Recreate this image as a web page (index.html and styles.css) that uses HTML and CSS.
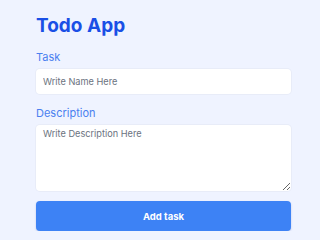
FILE: index.html
```html
<!DOCTYPE html>
<html>
<head>
<meta charset="utf-8">
<link rel="stylesheet" href="styles.css">
</head>
<body>
<div class="app">
  <h1 class="title">Todo App</h1>
  <form class="form">
    <label class="label" for="task">Task</label>
    <input class="input" id="task" type="text" placeholder="Write Name Here">
    <label class="label label-desc" for="desc">Description</label>
    <textarea class="textarea" id="desc" placeholder="Write Description Here"></textarea>
    <button class="button" type="button">Add task</button>
  </form>
</div>
</body>
</html>
```
FILE: styles.css
```css
html, body {
  margin: 0;
  padding: 0;
  background: #eff3ff;
  font-family: Inter, "Noto Sans", sans-serif;
}
.app {
  padding: 12px 29px 0 36px;
}
.title {
  margin: 0 0 9px 0;
  font-size: 19px;
  line-height: 28px;
  font-weight: 700;
  color: #1a4fe6;
}
.form {
  display: flex;
  flex-direction: column;
}
.label {
  font-size: 11px;
  line-height: 16px;
  color: #4a80f0;
  margin-bottom: 4px;
}
.label-desc {
  margin-top: 11px;
}
.input, .textarea {
  box-sizing: border-box;
  border: none;
  background: #fff;
  border-radius: 4px;
  font-family: Inter, "Noto Sans", sans-serif;
  font-size: 9.2px;
  color: #111827;
  padding: 0 7px;
  outline: none;
  box-shadow: 0 0 0 1px #e8ecf8;
}
.input {
  height: 25px;
}
.textarea {
  height: 66px;
  padding: 3px 7px;
  resize: vertical;
}
.input::placeholder, .textarea::placeholder {
  color: #6b7280;
}
.button {
  margin-top: 10px;
  height: 30px;
  border: none;
  border-radius: 4px;
  background: #3d82f5;
  color: #fff;
  font-family: Inter, "Noto Sans", sans-serif;
  font-size: 9.5px;
  font-weight: 700;
  box-shadow: 0 1px 2px rgba(30, 64, 175, 0.25);
}
```
